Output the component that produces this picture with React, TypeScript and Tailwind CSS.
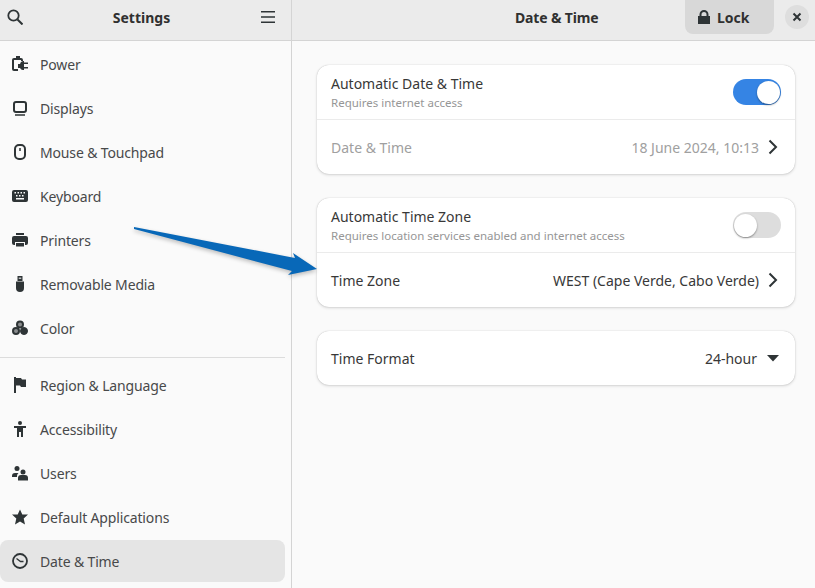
import * as React from 'react';

const font = "font-['Noto_Sans','Liberation_Sans',sans-serif]";

function PowerIcon() {
    return <svg width="16" height="16" viewBox="0 0 16 16" fill="#2e3436">
        <path d="M4 0h4v2h1a2 2 0 0 1 2 2v1H9V4H2v9h4v2H2a2 2 0 0 1-2-2V4a2 2 0 0 1 2-2h2z" />
        <path d="M11 5h1v1.500h4V8h-4v3h4v1.500h-4V14h-1a3.500 3.500 0 0 1-3-2H6V8h2a3.500 3.500 0 0 1 3-3z" />
    </svg>;
}
function DisplayIcon() {
    return <svg width="16" height="16" viewBox="0 0 16 16" fill="none" stroke="#2e3436">
        <rect x="2" y="2" width="12" height="10" rx="2" strokeWidth="2" />
        <path d="M3 15h10" strokeWidth="1.500" />
    </svg>;
}
function MouseIcon() {
    return <svg width="16" height="16" viewBox="0 0 16 16" fill="none" stroke="#2e3436">
        <rect x="3" y="1" width="10" height="14" rx="4" strokeWidth="2" />
        <path d="M8 4v3" strokeWidth="1.500" />
    </svg>;
}
function KeyboardIcon() {
    return <svg width="16" height="16" viewBox="0 0 16 16" fill="#2e3436">
        <path fillRule="evenodd" d="M2 2h12a2 2 0 0 1 2 2v8a2 2 0 0 1-2 2H2a2 2 0 0 1-2-2V4a2 2 0 0 1 2-2zm.5 2v1.500H4V4zm3 0v1.500H7V4zm3 0v1.500H10V4zm3 0v1.500H13V4zM4 7v1.500h1.500V7zm3 0v1.500h1.500V7zm3 0v1.500h1.500V7zM4 10v1.500h8V10z" />
    </svg>;
}
function PrinterIcon() {
    return <svg width="16" height="16" viewBox="0 0 16 16" fill="#2e3436">
        <path d="M4 1h8v2H4z" />
        <path fillRule="evenodd" d="M2 4h12a2 2 0 0 1 2 2v5a2 2 0 0 1-2 2h-1v-3H3v3H2a2 2 0 0 1-2-2V6a2 2 0 0 1 2-2z" />
        <path d="M4 11h8v3.500H4z" />
    </svg>;
}
function UsbIcon() {
    return <svg width="16" height="16" viewBox="0 0 16 16" fill="#2e3436">
        <path fillRule="evenodd" d="M5.500 0h5v5h-5zM6.800 1.500v1.500h.9V1.500zm1.500 0v1.500h.9V1.500z" />
        <path d="M4 5.500h8V12a4 4 0 0 1-8 0z" />
    </svg>;
}
function ColorIcon() {
    return <svg width="16" height="16" viewBox="0 0 16 16" fill="none" stroke="#2e3436">
        <circle cx="8" cy="4.500" r="3" strokeWidth="2" fill="#8a8c8e" />
        <circle cx="4" cy="11" r="3" strokeWidth="2" fill="#8a8c8e" />
        <circle cx="12" cy="11" r="3.500" strokeWidth="1" fill="#2e3436" />
    </svg>;
}
function FlagIcon() {
    return <svg width="16" height="16" viewBox="0 0 16 16" fill="#2e3436">
        <path d="M2 0h2v16H2z" />
        <path d="M4 1h5l1 1.500h4V10H9L8 8.500H4z" />
    </svg>;
}
function AccessIcon() {
    return <svg width="16" height="16" viewBox="0 0 16 16" fill="#2e3436">
        <circle cx="8" cy="2" r="2" />
        <path d="M2 5h12v2h-3v9H9v-5H7v5H5V7H2z" />
    </svg>;
}
function UsersIcon() {
    return <svg width="16" height="16" viewBox="0 0 16 16" fill="#2e3436">
        <circle cx="5" cy="3.500" r="2.500" />
        <circle cx="11" cy="7" r="2.500" />
        <path d="M0 11a3 3 0 0 1 3-3h3.500A4.500 4.500 0 0 0 5 11v1H0z" />
        <path d="M6 13a3 3 0 0 1 3-3h4a3 3 0 0 1 3 3v2.500H6z" />
    </svg>;
}
function StarIcon() {
    return <svg width="16" height="16" viewBox="0 0 16 16" fill="#2e3436">
        <path d="M8 .5l2.300 5H16l-4.300 3.900 1.300 6L8 12.400l-5 3 1.300-6L0 5.500h5.700z" />
    </svg>;
}
function ClockIcon() {
    return <svg width="16" height="16" viewBox="0 0 16 16" fill="none" stroke="#2e3436">
        <circle cx="8" cy="8" r="7" strokeWidth="1.800" />
        <path d="M4.500 5.500L8.500 8.500H11.500" strokeWidth="1.300" />
    </svg>;
}

const firstGroup: { title: string; icon: React.ReactNode }[] = [
    { title: "Power", icon: <PowerIcon /> },
    { title: "Displays", icon: <DisplayIcon /> },
    { title: "Mouse & Touchpad", icon: <MouseIcon /> },
    { title: "Keyboard", icon: <KeyboardIcon /> },
    { title: "Printers", icon: <PrinterIcon /> },
    { title: "Removable Media", icon: <UsbIcon /> },
    { title: "Color", icon: <ColorIcon /> },
];
const secondGroup: { title: string; icon: React.ReactNode; selected?: boolean }[] = [
    { title: "Region & Language", icon: <FlagIcon /> },
    { title: "Accessibility", icon: <AccessIcon /> },
    { title: "Users", icon: <UsersIcon /> },
    { title: "Default Applications", icon: <StarIcon /> },
    { title: "Date & Time", icon: <ClockIcon />, selected: true },
];

function SidebarRow(props: { title: string; icon: React.ReactNode; selected?: boolean }) {
    return <div className={"flex flex-row items-center h-[42px] mr-[6px] pl-[12px] gap-[12px] rounded-lg text-[14px] tracking-[-0.15px] text-[#48494a]" + (props.selected ? " bg-[#e5e5e5]" : "")}>
        {props.icon}
        <span>{props.title}</span>
    </div>;
}

function Chevron() {
    return <svg width="16" height="16" viewBox="0 0 16 16" fill="none" stroke="#2e3436" strokeWidth="2">
        <path d="M4.500 1.500L11 8l-6.500 6.500" />
    </svg>;
}

function Toggle(props: { on: boolean }) {
    return <div className={"flex flex-row items-center w-[48px] h-[26px] rounded-full" + (props.on ? " bg-[#3584e4] justify-end pr-px" : " bg-[#dddddd] justify-start pl-px")}>
        <div className="w-[23px] h-[23px] rounded-full bg-white shadow-[0_1px_2px_rgba(0,0,0,0.4)]"></div>
    </div>;
}

function Card(props: { children: React.ReactNode }) {
    return <div className="flex flex-col w-[478px] bg-white rounded-xl shadow-[0_0_1px_rgba(0,0,0,0.25),0_1px_3px_rgba(0,0,0,0.15)]">
        {props.children}
    </div>;
}

function TwoLineRow(props: { title: string; sub: string; on: boolean }) {
    return <div className="flex flex-row items-center justify-between h-[55px] pl-[14px] pr-[14px] border-b border-[#ebebeb]">
        <div className="flex flex-col">
            <span className="text-[14px] leading-[19px] text-[#383838]">{props.title}</span>
            <span className="mt-[2px] text-[11.5px] leading-[15px] text-[#969696]">{props.sub}</span>
        </div>
        <Toggle on={props.on} />
    </div>;
}

function ValueRow(props: { title: string; value: string; dim?: boolean; children: React.ReactNode }) {
    return <div className="flex flex-row items-center justify-between h-[54px] pl-[14px] pr-[14px] text-[14px]">
        <span className={props.dim ? "text-[#a0a0a0]" : "text-[#383838]"}>{props.title}</span>
        <div className="flex flex-row items-center gap-[6px]">
            <span className={props.dim ? "text-[#a0a0a0]" : "text-[#383838]"}>{props.value}</span>
            {props.children}
        </div>
    </div>;
}

export default function App() {
    return <div className={"relative flex flex-col w-[815px] h-[588px] overflow-hidden bg-[#fafafa] " + font}>
        <div className="flex flex-row h-[41px] shrink-0 bg-[#ebebeb] border-b border-[#d4d4d4]">
            <div className="relative flex flex-row items-center justify-between w-[292px] pl-[7px] pr-[15px] pb-[6px] border-r border-[#d4d4d4]">
                <svg width="16" height="16" viewBox="0 0 16 16" fill="none" stroke="#2e3436" strokeWidth="1.800">
                    <circle cx="6.500" cy="6.500" r="5.200" />
                    <path d="M10.500 10.500l5 5" strokeWidth="2" />
                </svg>
                <span className="text-[14px] font-bold text-[#303030]">Settings</span>
                <svg width="16" height="16" viewBox="0 0 16 16" fill="#2e3436">
                    <path d="M1 2h14v1.500H1zM1 7.200h14v1.500H1zM1 12.500h14V14H1z" />
                </svg>
            </div>
            <div className="flex flex-row items-start flex-1 pl-[223px]">
                <span className="mt-[7px] text-[14px] tracking-[-0.15px] font-bold text-[#303030] w-[170px]">Date & Time</span>
                <div className="flex flex-row items-center gap-[6px] w-[89px] h-[34px] pl-[12px] rounded-b-lg bg-[#d8d8d8]">
                    <svg width="14" height="16" viewBox="0 0 14 16" fill="#2e3436">
                        <path fillRule="evenodd" d="M7 1a4.500 4.500 0 0 1 4.500 4.500V7H13v8H1V7h1.500V5.500A4.500 4.500 0 0 1 7 1zm0 2a2.500 2.500 0 0 0-2.500 2.500V7h5V5.500A2.500 2.500 0 0 0 7 3z" />
                    </svg>
                    <span className="text-[14px] font-bold text-[#303030]">Lock</span>
                </div>
                <div className="flex items-center justify-center w-[24px] h-[24px] mt-[5px] ml-[11px] rounded-full bg-[#dedede]">
                    <svg width="10" height="10" viewBox="0 0 10 10" fill="none" stroke="#2e3436" strokeWidth="2">
                        <path d="M1.500 1.500l7 7M8.500 1.500l-7 7" />
                    </svg>
                </div>
            </div>
        </div>
        <div className="flex flex-row flex-1">
            <div className="flex flex-col w-[292px] shrink-0 pt-[2px] border-r border-[#d4d4d4]">
                <div className="flex flex-col gap-[2px]">
                    {firstGroup.map((a, i) => <SidebarRow key={i} title={a.title} icon={a.icon} />)}
                </div>
                <div className="h-px mt-[8px] mb-[6px] mr-[6px] bg-[#dcdcdc]"></div>
                <div className="flex flex-col gap-[2px]">
                    {secondGroup.map((a, i) => <SidebarRow key={i} title={a.title} icon={a.icon} selected={a.selected} />)}
                </div>
            </div>
            <div className="flex flex-col flex-1 items-start gap-[24px] pt-[24px] pl-[25px]">
                <Card>
                    <TwoLineRow title="Automatic Date & Time" sub="Requires internet access" on={true} />
                    <ValueRow title="Date & Time" value="18 June 2024, 10:13" dim><Chevron /></ValueRow>
                </Card>
                <Card>
                    <TwoLineRow title="Automatic Time Zone" sub="Requires location services enabled and internet access" on={false} />
                    <ValueRow title="Time Zone" value="WEST (Cape Verde, Cabo Verde)"><Chevron /></ValueRow>
                </Card>
                <Card>
                    <div className="flex flex-row items-center justify-between h-[54px] pl-[14px] pr-[16px] text-[14px] text-[#383838]">
                        <span>Time Format</span>
                        <div className="flex flex-row items-center gap-[10px]">
                            <span>24-hour</span>
                            <svg width="12" height="7" viewBox="0 0 12 7" fill="#2e3436"><path d="M0 0h12L6 6.500z" /></svg>
                        </div>
                    </div>
                </Card>
            </div>
        </div>
        <svg className="absolute left-0 top-0 pointer-events-none" width="815" height="588" viewBox="0 0 815 588">
            <polygon points="134,227 295,258 293,253 317,269 288,275 292,271 134,229" fill="#000" opacity="0.25" transform="translate(0,2)" style={{ filter: "blur(2px)" }} />
            <polygon points="134,227 295,258 293,253 317,269 288,275 292,271 134,229" fill="#0868b8" />
        </svg>
    </div>;
}
